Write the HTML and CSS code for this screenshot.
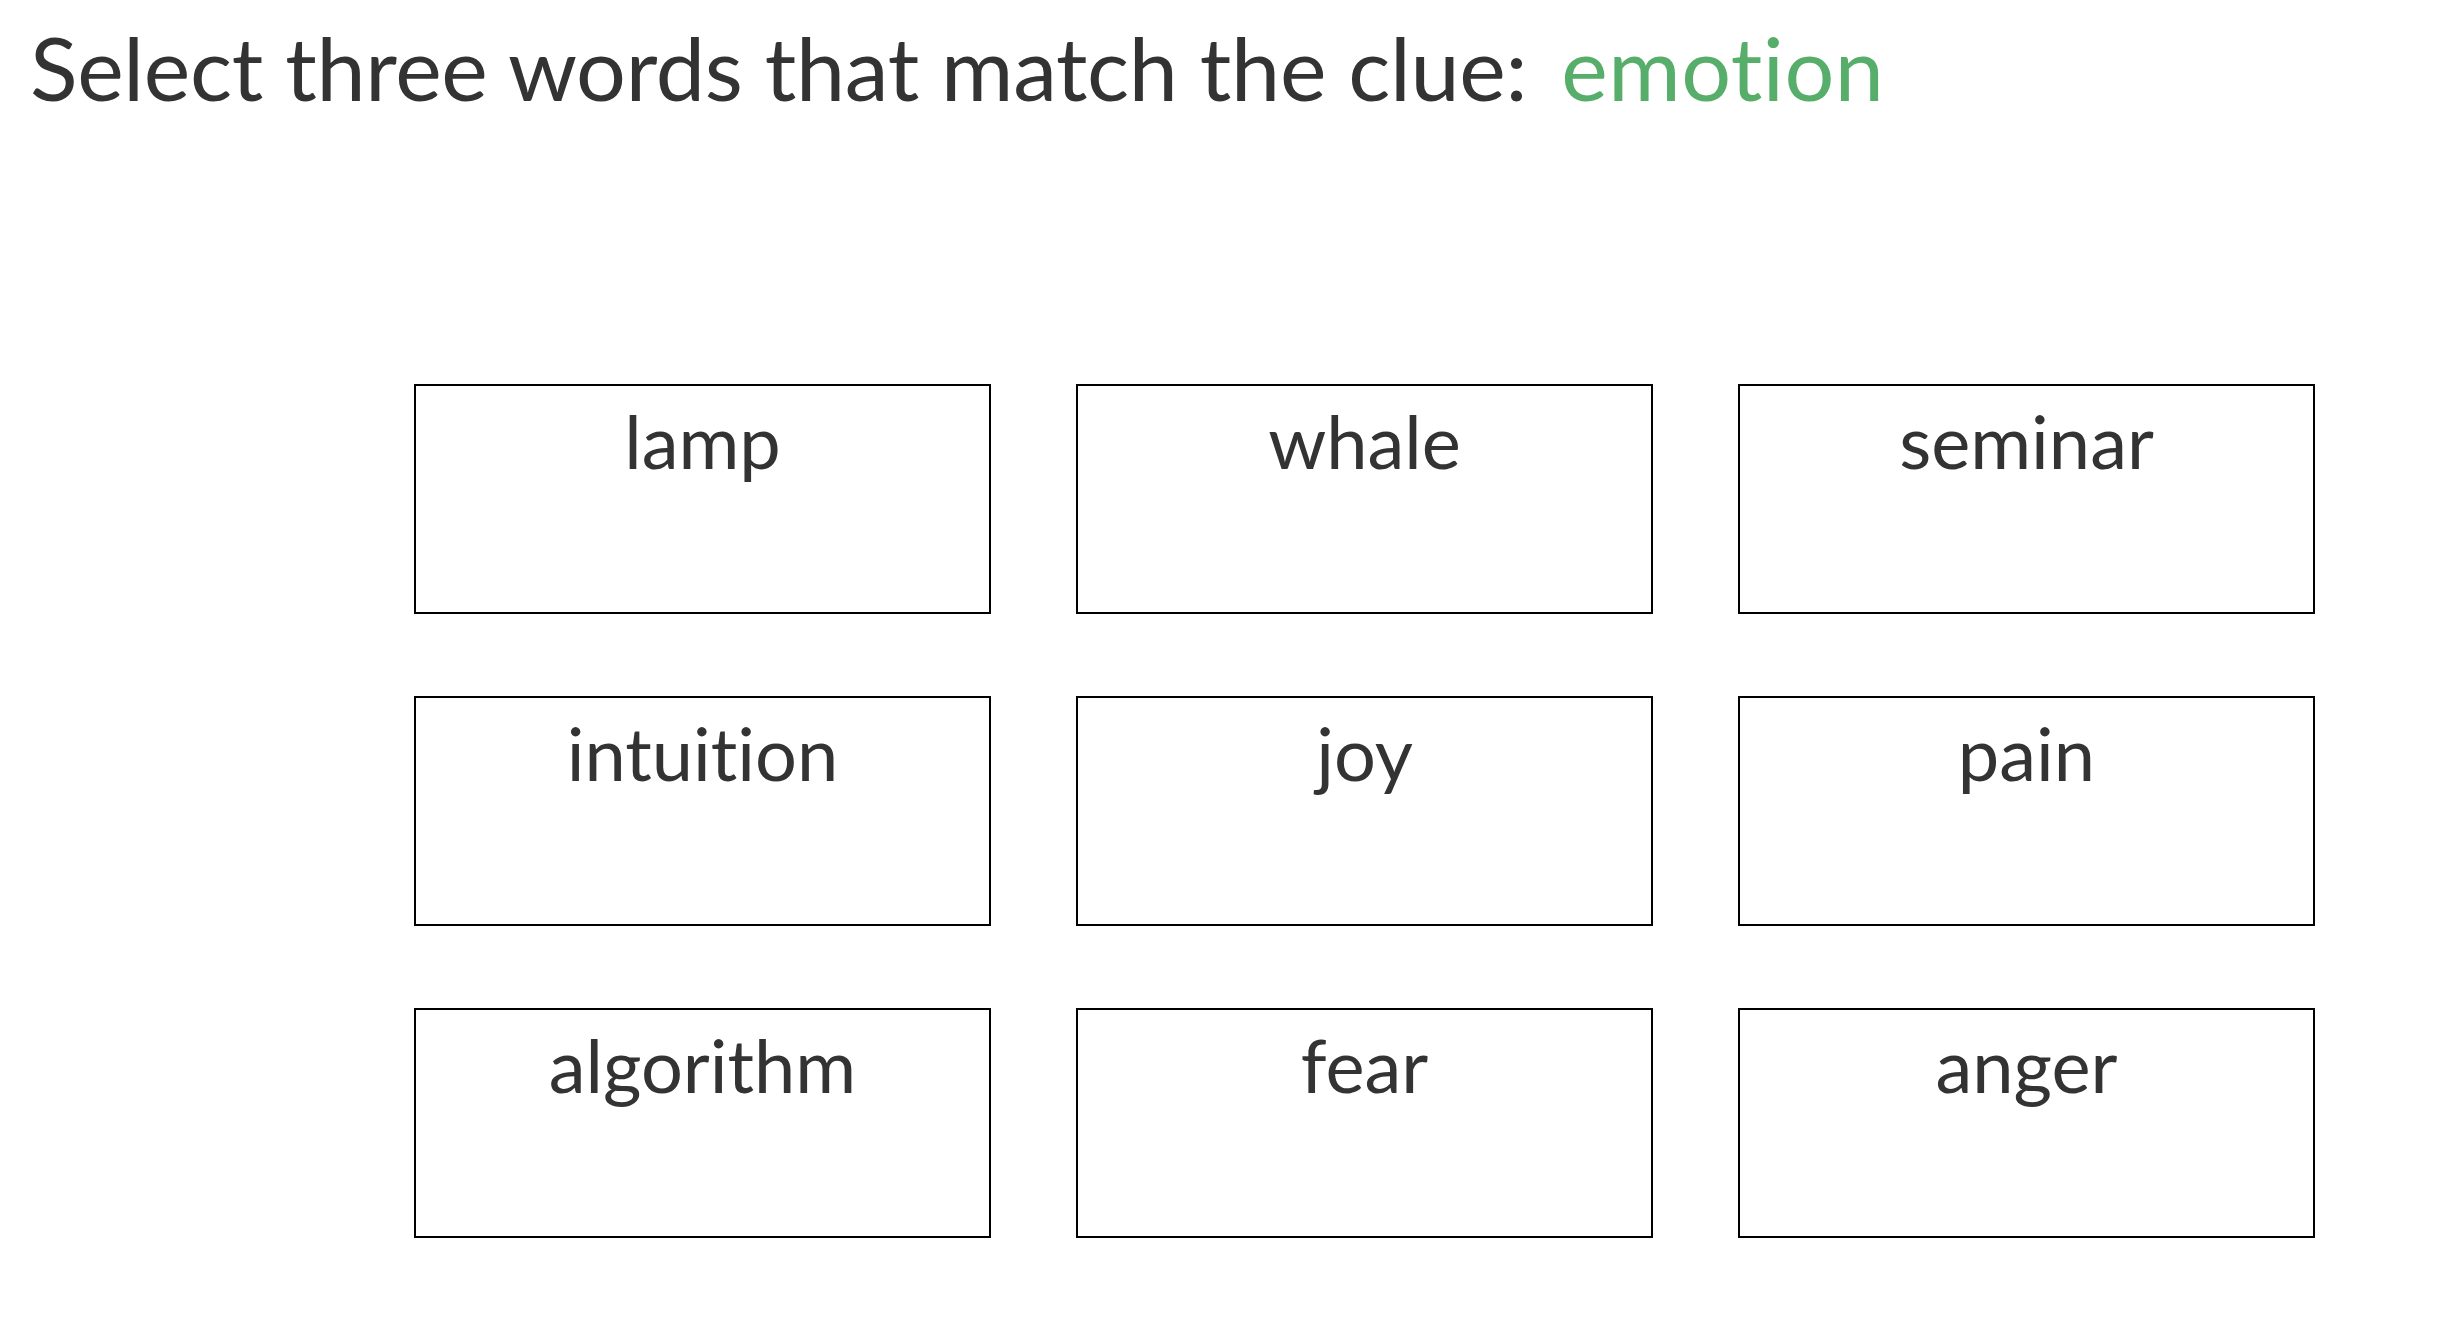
FILE: index.html
```html
<!DOCTYPE html>
<html lang="en">
<head>
<meta charset="utf-8">
<title>Select three words</title>
<link rel="stylesheet" href="styles.css">
</head>
<body>
<main class="page">
  <h1 class="prompt">Select three words that match the clue: <span class="clue">emot&zwnj;ion</span></h1>
  <div class="grid">
    <button class="word">lamp</button>
    <button class="word">whale</button>
    <button class="word">seminar</button>
    <button class="word">intu&zwnj;it&zwnj;ion</button>
    <button class="word">joy</button>
    <button class="word">pain</button>
    <button class="word">algorithm</button>
    <button class="word">fear</button>
    <button class="word">anger</button>
  </div>
</main>
</body>
</html>
```

FILE: styles.css
```css
html, body {
  margin: 0;
  padding: 0;
  background: #ffffff;
}

body {
  font-family: Lato, "Open Sans", "Liberation Sans", sans-serif;
  color: #333333;
  font-variant-ligatures: none;
  font-feature-settings: "liga" 0, "clig" 0, "dlig" 0, "rlig" 0, "calt" 0;
}

.page {
  padding: 15px 0 0 30px;
}

.prompt {
  margin: 0;
  font-size: 88px;
  font-weight: 400;
  line-height: 1.2;
  letter-spacing: -0.3px;
  color: #333333;
  white-space: nowrap;
}

.clue {
  margin-left: 12px;
  letter-spacing: 0.5px;
  color: #57ae6b;
}

.grid {
  margin: 263px 0 0 384px;
  display: grid;
  grid-template-columns: repeat(3, 577px);
  grid-auto-rows: 230px;
  column-gap: 85px;
  row-gap: 82px;
}

.word {
  box-sizing: border-box;
  display: flex;
  justify-content: center;
  align-items: flex-start;
  padding: 11px 0 0;
  margin: 0;
  background: #ffffff;
  border: 2px solid #000000;
  border-radius: 0;
  font-family: inherit;
  font-size: 74px;
  font-weight: 400;
  line-height: 1.2;
  color: #333333;
  font-variant-ligatures: none;
  font-feature-settings: "liga" 0, "clig" 0, "dlig" 0, "rlig" 0, "calt" 0;
  cursor: pointer;
}
```
